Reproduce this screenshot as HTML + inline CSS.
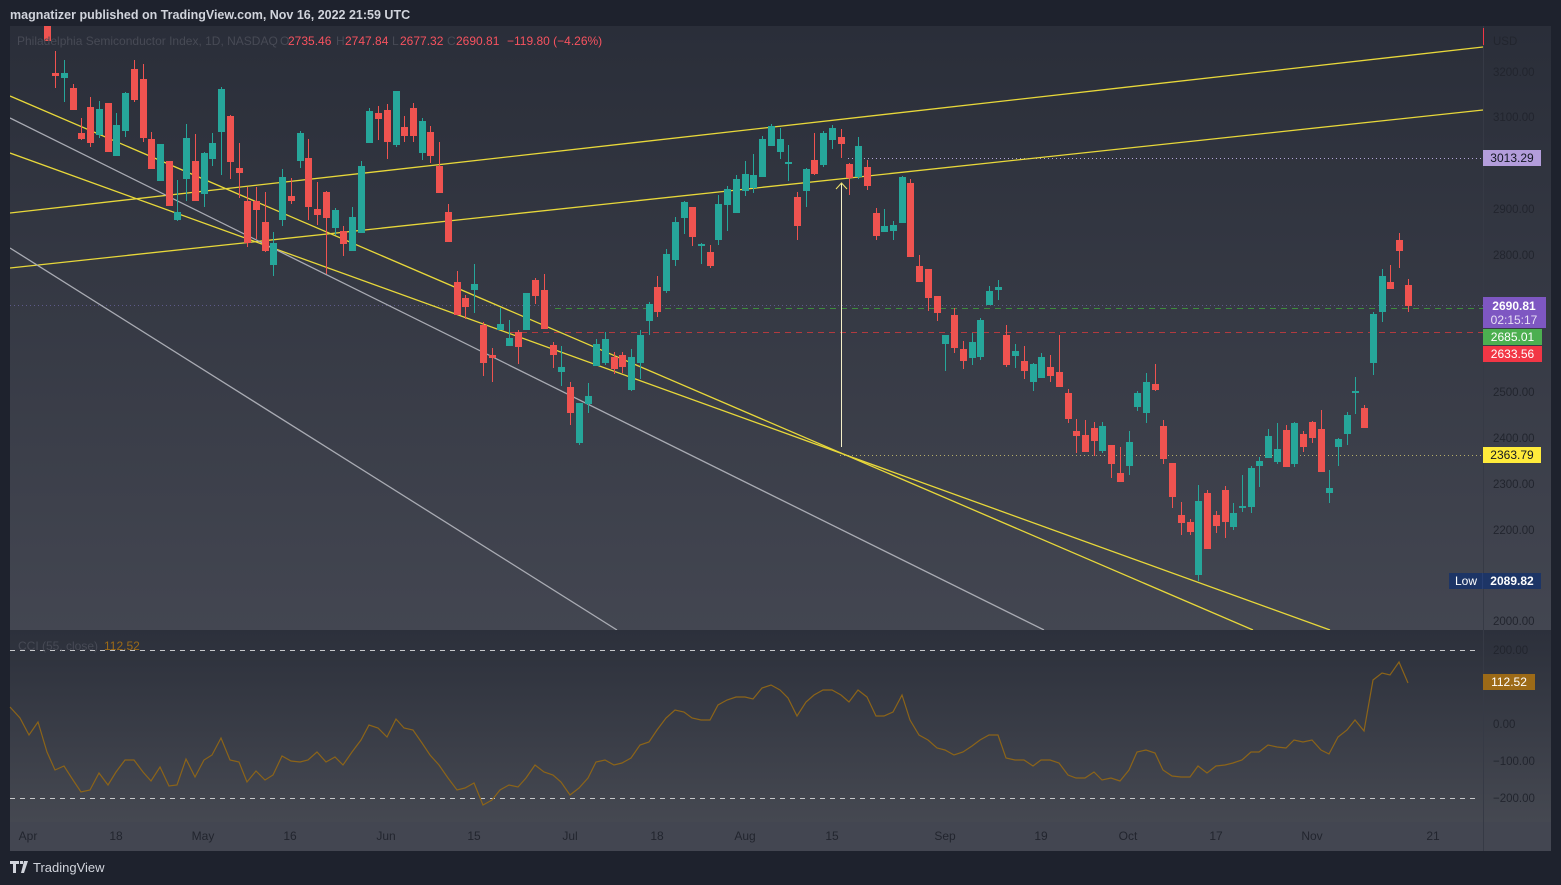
<!DOCTYPE html>
<html><head><meta charset="utf-8"><style>
html,body{margin:0;padding:0;background:#1e222d;width:1561px;height:885px;overflow:hidden;font-family:"Liberation Sans",sans-serif}
svg{position:absolute;left:0;top:0}
</style></head><body>
<svg id="s" width="1561" height="885" xmlns="http://www.w3.org/2000/svg">
<defs>
<linearGradient id="g1" x1="0" y1="0" x2="0" y2="1"><stop offset="0" stop-color="#2a2e39"/><stop offset="1" stop-color="#434651"/></linearGradient>
<linearGradient id="g2" x1="0" y1="0" x2="0" y2="1"><stop offset="0" stop-color="#2c303b"/><stop offset="1" stop-color="#454851"/></linearGradient>
<clipPath id="cm"><rect x="10" y="26" width="1473" height="604"/></clipPath>
</defs>
<rect x="0" y="0" width="1561" height="885" fill="#1e222d"/>
<text x="10" y="19" font-size="12.5" font-weight="bold" fill="#d1d4dc" font-family="Liberation Sans">magnatizer published on TradingView.com, Nov 16, 2022 21:59 UTC</text>
<rect x="10" y="26" width="1541" height="604" fill="url(#g1)"/>
<rect x="10" y="630" width="1541" height="192" fill="url(#g2)"/>
<rect x="10" y="822" width="1541" height="29" fill="#434651"/>
<line x1="1483.5" y1="26" x2="1483.5" y2="851" stroke="#363a45" stroke-width="1"/>
<g id="main" clip-path="url(#cm)"></g>
<g id="over"></g>
</svg>
<script>
var NS="http://www.w3.org/2000/svg",s=document.getElementById('s'),m=document.getElementById('main'),o=document.getElementById('over');
function el(p,t,a,tx){var e=document.createElementNS(NS,t);for(var k in a)e.setAttribute(k,a[k]);if(tx!==undefined)e.textContent=tx;p.appendChild(e);return e;}
var AX='#22252e';
el(m,'line',{x1:10,y1:305.5,x2:1483,y2:305.5,stroke:'#5d5a8a','stroke-dasharray':'1 3'});
el(m,'line',{x1:555,y1:308.5,x2:1483,y2:308.5,stroke:'#3f8a3f','stroke-dasharray':'6 5'});
el(m,'line',{x1:510,y1:332.5,x2:1483,y2:332.5,stroke:'#b23a3f','stroke-dasharray':'6 5'});
el(m,'line',{x1:848,y1:158.5,x2:1483,y2:158.5,stroke:'#b3a6d8','stroke-dasharray':'1 3'});
el(m,'line',{x1:840,y1:455.5,x2:1483,y2:455.5,stroke:'#b5ad6a','stroke-dasharray':'1 3'});
[[10,213,1483,47,'#e8d83a'],[10,268,1483,110,'#e8d83a'],[10,96,1253,630,'#e8d83a'],[10,153,1330,630,'#e8d83a'],[10,118,1044,630,'#a9abb3'],[10,248,617,630,'#a9abb3']].forEach(function(l){el(m,'line',{x1:l[0],y1:l[1],x2:l[2],y2:l[3],stroke:l[4],'stroke-width':1.3});});
var C=[[47,'r',20,41],[55,'r',73,76,51,88],[64,'g',73,78,60,102],[73,'r',88,110,84,110],[81,'r',133,139,118,140],[90,'r',107,143,97,147],[99,'g',109,135,101,138],[108,'r',103,152],[116,'g',125,156,113,156],[125,'g',93,131,92,137],[134,'r',69,100,60,102],[143,'r',79,138,64,142],[151,'r',139,169,132,169],[160,'g',144,181],[169,'r',161,206],[177,'g',212,220,180,221],[186,'g',138,179,124,201],[195,'r',161,201,134,201],[204,'g',153,194,152,207],[212,'g',143,159,133,166],[221,'g',89,132,87,175],[230,'r',116,162,115,179],[239,'r',168,173,143,198],[247,'r',201,243,187,247],[256,'r',201,210,187,239],[265,'r',222,251,192,252],[273,'g',243,265,232,276],[282,'g',177,220,169,226],[291,'r',196,201,178,204],[300,'g',133,161,131,168],[308,'r',158,207,139,220],[317,'r',209,215,182,225],[326,'r',192,218,191,274],[335,'g',210,228,208,235],[343,'r',231,244,226,256],[352,'g',217,251,207,251],[361,'g',166,233,161,233],[369,'g',111,143,108,143],[378,'r',113,119,106,140],[387,'r',110,142,104,159],[396,'g',91,145,91,147],[404,'r',127,136,116,142],[413,'r',108,136,103,142],[422,'g',121,153,118,160],[430,'r',132,156,126,163],[439,'r',166,193,142,193],[448,'r',212,242,204,242],[457,'r',282,315,271,315],[465,'r',298,307,295,319],[474,'g',284,290,264,313],[483,'r',325,363,322,376],[492,'r',355,358,348,382],[500,'g',324,330,308,330],[509,'g',338,346,320,346],[518,'r',332,347,330,364],[526,'g',293,330,293,330],[535,'r',280,296,278,304],[544,'r',290,329,274,329],[553,'r',345,355,342,368],[561,'g',367,372,346,386],[570,'r',387,413,382,425],[579,'g',403,443,403,445],[588,'g',396,404,383,413],[596,'g',344,366,339,366],[605,'g',339,363,332,365],[614,'r',357,369,352,374],[622,'r',355,367,352,373],[631,'g',357,390,349,391],[640,'g',335,363,330,379],[649,'g',304,321,302,335],[657,'r',287,312,276,317],[666,'g',254,291,249,293],[675,'g',222,260,217,266],[684,'g',202,218,201,234],[692,'r',207,237,207,246],[701,'g',244,246,243,264],[710,'r',252,266,245,268],[718,'g',204,240,195,245],[727,'g',189,205,186,231],[736,'g',179,213,175,213],[745,'g',174,191,161,196],[753,'g',175,188,154,193],[762,'g',139,177,136,177],[771,'g',126,146,124,146],[780,'g',139,152,128,159],[788,'g',162,164,145,181],[797,'r',197,226,192,240],[806,'g',169,191,168,207],[814,'r',160,174,133,175],[823,'g',133,165,131,167],[832,'g',128,140,125,149],[841,'r',137,144,129,158],[849,'r',164,178,163,195],[858,'g',146,177,137,179],[867,'r',167,186,160,190],[876,'r',213,236,208,240],[884,'g',226,232,209,232],[893,'g',225,231,221,240],[902,'g',177,223,176,223],[910,'r',183,257,179,257],[919,'r',266,282,255,282],[928,'r',269,298,269,311],[937,'r',296,313,296,321],[945,'g',335,344,335,371],[954,'r',315,348,308,353],[963,'r',349,361,341,369],[972,'g',342,358,333,365],[980,'g',320,357,318,360],[989,'g',291,305,286,305],[998,'g',287,290,280,300],[1006,'r',335,365,325,367],[1015,'g',351,356,344,368],[1024,'r',361,371,346,379],[1033,'g',364,382,363,391],[1041,'g',357,378,353,378],[1050,'r',367,376,355,382],[1059,'r',372,387,335,387],[1068,'r',393,419,389,423],[1076,'r',431,436,419,453],[1085,'r',435,452,420,452],[1094,'r',428,441,422,456],[1102,'g',426,451,422,453],[1111,'r',445,464,445,478],[1120,'r',473,482,447,482],[1129,'g',442,466,431,475],[1137,'g',393,407,391,411],[1146,'g',382,413,373,423],[1155,'r',384,390,364,391],[1163,'r',426,459,420,464],[1172,'r',463,497,463,508],[1181,'r',515,523,502,535],[1190,'r',522,532,519,535],[1198,'g',501,575,485,581],[1207,'r',493,549,490,549],[1216,'r',515,526,511,533],[1225,'r',490,522,486,538],[1233,'g',513,527,503,530],[1242,'g',506,508,475,512],[1251,'g',468,507,466,513],[1259,'g',461,466,457,487],[1268,'g',436,458,429,458],[1277,'g',449,462,423,464],[1286,'r',430,467,425,467],[1294,'g',423,464,422,467],[1303,'r',434,447,431,452],[1312,'r',422,438,421,443],[1321,'r',429,472,410,472],[1329,'g',488,493,470,503],[1338,'g',439,447,438,466],[1347,'g',415,434,412,445],[1355,'g',391,393,377,414],[1364,'r',408,428,405,428],[1373,'g',314,363,312,375],[1382,'g',276,312,269,322],[1390,'r',282,289,265,289],[1399,'r',240,251,233,268],[1408,'r',285,306,279,312]];
C.forEach(function(c){var col=c[1]=='g'?'#26a69a':'#ef5350';var wt=c.length>4?c[4]:c[2],wb=c.length>4?c[5]:c[3];
el(m,'line',{x1:c[0]+.5,y1:wt,x2:c[0]+.5,y2:wb,stroke:col,'stroke-width':1});
el(m,'rect',{x:c[0]-3,y:c[2],width:7,height:Math.max(2,c[3]-c[2]),fill:col});});
el(m,'line',{x1:841.5,y1:447,x2:841.5,y2:183,stroke:'#f5f0c8','stroke-width':1});
el(m,'polyline',{points:'836,189 841.5,183 847,189',fill:'none',stroke:'#f5e66a','stroke-width':1});
el(o,'text',{x:17,y:45,'font-size':12,fill:'#474a55'},'Philadelphia Semiconductor Index, 1D, NASDAQ');
[[280,'O','#474a55'],[288,'2735.46','#f7525f'],[336,'H','#474a55'],[345,'2747.84','#f7525f'],[392,'L','#474a55'],[400,'2677.32','#f7525f'],[447,'C','#474a55'],[456,'2690.81','#f7525f'],[507,'−119.80 (−4.26%)','#f7525f']].forEach(function(a){el(o,'text',{x:a[0],y:45,'font-size':12,fill:a[2]},a[1]);});
el(o,'line',{x1:1483.5,y1:28,x2:1483.5,y2:45,stroke:'#f23645'});
el(o,'text',{x:1493,y:45,'font-size':11.5,fill:AX},'USD');
[[72,'3200.00'],[117,'3100.00'],[209,'2900.00'],[255,'2800.00'],[392,'2500.00'],[438,'2400.00'],[484,'2300.00'],[530,'2200.00'],[621,'2000.00'],[650,'200.00'],[724,'0.00'],[761,'−100.00'],[798,'−200.00']].forEach(function(a){el(o,'text',{x:1493,y:a[0]+4,'font-size':11.5,fill:AX},a[1]);});
function lab(y,h,bg,fg,txt,x,w){el(o,'rect',{x:x||1483,y:y,width:w||58,height:h,fill:bg});el(o,'text',{x:(x||1483)+(w||58)/2,y:y+12,'font-size':12,fill:fg,'text-anchor':'middle'},txt);}
lab(150,16,'#b39ddb','#131722','3013.29');
el(o,'rect',{x:1483,y:297,width:63,height:31,fill:'#7e57c2'});
el(o,'text',{x:1514,y:310,'font-size':12,'font-weight':'bold',fill:'#fff','text-anchor':'middle'},'2690.81');
el(o,'text',{x:1514,y:324,'font-size':12,fill:'#e8e0f5','text-anchor':'middle'},'02:15:17');
lab(329,16,'#4caf50','#fff','2685.01',1483,59);
lab(346,16,'#f23645','#fff','2633.56',1483,59);
lab(447,16,'#ffeb3b','#131722','2363.79');
el(o,'rect',{x:1449,y:573,width:92,height:16,fill:'#1d3566'});
el(o,'text',{x:1455,y:585,'font-size':12,fill:'#fff'},'Low');
el(o,'line',{x1:1482.5,y1:573,x2:1482.5,y2:589,stroke:'#283f73'});
el(o,'text',{x:1512,y:585,'font-size':12,'font-weight':'bold',fill:'#fff','text-anchor':'middle'},'2089.82');
lab(674,16,'#9c6a17','#fff','112.52',1483,52);
el(o,'line',{x1:10,y1:650.5,x2:1478,y2:650.5,stroke:'#c8c9cc','stroke-dasharray':'5 5'});
el(o,'line',{x1:10,y1:798.5,x2:1478,y2:798.5,stroke:'#c8c9cc','stroke-dasharray':'5 5'});
el(o,'text',{x:18,y:650,'font-size':12,fill:'#474a55'},'CCI (55, close)');
el(o,'text',{x:104,y:650,'font-size':12,fill:'#9c6a17'},'112.52');
var P=[[10,707],[20,718],[29,735],[38,722],[47,752],[55,770],[64,766],[73,780],[81,792],[90,790],[99,773],[108,785],[116,772],[125,760],[134,760],[143,772],[151,781],[160,767],[169,786],[177,785],[186,759],[195,777],[204,760],[212,755],[221,738],[230,760],[239,762],[247,782],[256,771],[265,780],[273,775],[282,756],[291,761],[300,762],[308,760],[317,752],[326,762],[335,757],[343,765],[352,752],[361,740],[369,725],[378,728],[387,737],[396,719],[404,728],[413,730],[422,743],[430,755],[439,765],[448,778],[457,790],[465,788],[474,783],[483,805],[492,800],[500,790],[509,785],[518,787],[526,778],[535,765],[544,772],[553,775],[561,782],[570,795],[579,788],[588,778],[596,762],[605,760],[614,765],[622,763],[631,758],[640,745],[649,742],[657,730],[666,718],[675,710],[684,712],[692,718],[701,720],[710,720],[718,705],[727,700],[736,697],[745,697],[753,699],[762,688],[771,685],[780,690],[788,698],[797,716],[806,702],[814,695],[823,690],[832,690],[841,695],[849,702],[858,690],[867,697],[876,716],[884,716],[893,712],[902,695],[910,720],[919,735],[928,740],[937,748],[945,750],[954,755],[963,752],[972,746],[980,740],[989,735],[998,735],[1006,758],[1015,760],[1024,760],[1033,766],[1041,760],[1050,760],[1059,763],[1068,775],[1076,778],[1085,778],[1094,772],[1102,780],[1111,778],[1120,781],[1129,770],[1137,752],[1146,750],[1155,753],[1163,770],[1172,776],[1181,777],[1190,777],[1198,766],[1207,773],[1216,766],[1225,765],[1233,763],[1242,760],[1251,752],[1259,752],[1268,745],[1277,747],[1286,748],[1294,740],[1303,742],[1312,740],[1321,750],[1329,754],[1338,737],[1347,730],[1355,720],[1364,731],[1373,680],[1382,673],[1390,675],[1399,662],[1408,683]];
el(o,'polyline',{points:P.map(function(p){return p.join(',')}).join(' '),fill:'none',stroke:'#8c6418','stroke-width':1.2});
[[28,'Apr'],[116,'18'],[203,'May'],[290,'16'],[386,'Jun'],[474,'15'],[570,'Jul'],[657,'18'],[745,'Aug'],[832,'15'],[945,'Sep'],[1041,'19'],[1128,'Oct'],[1216,'17'],[1312,'Nov'],[1433,'21']].forEach(function(a){el(o,'text',{x:a[0],y:840,'font-size':12,fill:AX,'text-anchor':'middle'},a[1]);});
el(o,'path',{d:'M10 861h9v3h-3v9h-3v-9h-3z M20 861h3v3h-3z M24 861h4l-4 12h-3z',fill:'#d1d4dc'});
el(o,'text',{x:33,y:872,'font-size':13,fill:'#d1d4dc'},'TradingView');
</script>
</body></html>
